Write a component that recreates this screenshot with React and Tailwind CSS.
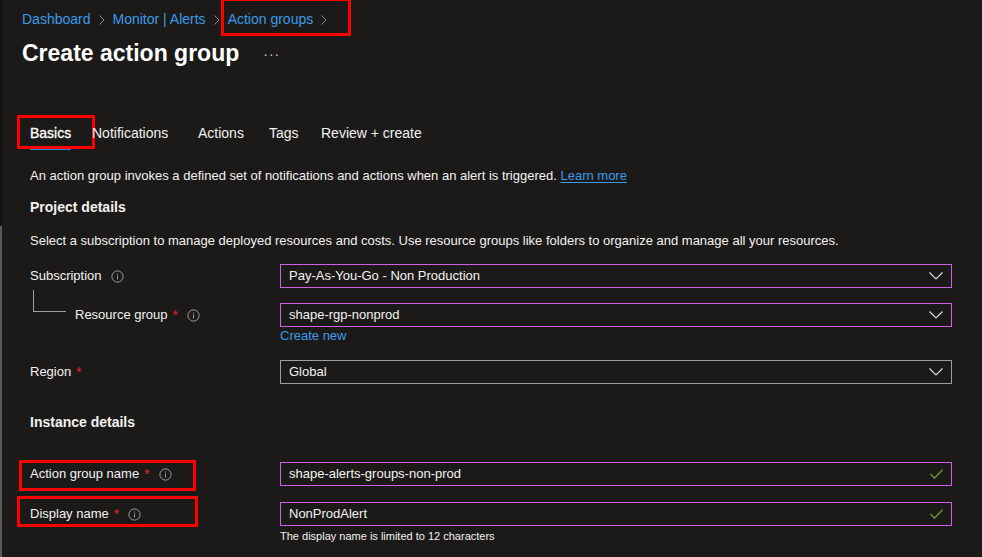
import { useState } from 'react'

const tabs = [
  { label: 'Basics', w: 'w-[62px]' },
  { label: 'Notifications', w: 'w-[106px]' },
  { label: 'Actions', w: 'w-[71px]' },
  { label: 'Tags', w: 'w-[52px]' },
  { label: 'Review + create', w: 'w-[120px]' },
]

const InfoIcon = () => (
  <svg width="13" height="13" viewBox="0 0 13 13" className="shrink-0">
    <circle cx="6.5" cy="6.5" r="5.6" fill="none" stroke="#a19f9d" strokeWidth="1" />
    <rect x="6" y="5.5" width="1" height="4" fill="#a19f9d" />
    <rect x="6" y="3.5" width="1" height="1" fill="#a19f9d" />
  </svg>
)

const Chevron = () => (
  <svg width="14" height="8" viewBox="0 0 14 8" className="shrink-0">
    <path d="M0.5 0.5 L7 7 L13.5 0.5" fill="none" stroke="#e1dfdd" strokeWidth="1.1" />
  </svg>
)

const Crumb = () => (
  <svg width="6" height="10" viewBox="0 0 6 10" className="mx-[8px] mt-[1px] shrink-0">
    <path d="M0.5 0.5 L5 5 L0.5 9.5" fill="none" stroke="#8a8886" strokeWidth="1" />
  </svg>
)

const Check = () => (
  <svg width="13" height="10" viewBox="0 0 13 10" className="shrink-0">
    <path d="M0.5 5 L4.5 9 L12.5 0.8" fill="none" stroke="#6b9a3a" strokeWidth="1.3" />
  </svg>
)

const Field = ({ value, border = 'border-[#d25ef0]', icon }) => (
  <div className={`flex h-6 w-[672px] items-center justify-between border ${border} pl-[8px] pr-[8px]`}>
    <span className="text-[13px] text-[#f3f2f1]">{value}</span>
    {icon === 'check' ? <Check /> : <Chevron />}
  </div>
)

const Required = () => <span className="ml-[5px] text-[14px] text-[#e3242b]">*</span>

const Label = ({ children }) => <span className="text-[13px] text-[#f3f2f1]">{children}</span>

const App = () => {
  const [active] = useState('Basics')

  return (
    <div className="flex h-[557px] w-[982px] overflow-hidden bg-[#1b1a19] font-['Liberation_Sans',Arial,sans-serif]">
      <div className="flex w-[2px] flex-col">
        <div className="h-[226px] bg-[#141312]" />
        <div className="flex-1 bg-[#5a5958]" />
      </div>

      <div className="flex flex-1 flex-col">
        {/* header */}
        <div className="pl-[20px] pt-[9px]">
          <div className="flex h-5 items-center text-[14px] leading-5 text-[#3c9be8]">
            <span>Dashboard</span>
            <Crumb />
            <span>Monitor | Alerts</span>
            <Crumb />
            <span className="relative flex items-center">
              Action groups
              <Crumb />
              <span className="absolute -left-[7px] -right-[16px] -top-[11px] -bottom-[7px] border-[3px] border-[#ff0000]" />
            </span>
          </div>
          <div className="mt-[8px] flex h-8 items-center">
            <h1 className="text-[23px] font-bold leading-8 text-white">Create action group</h1>
            <span className="ml-[24px] mt-[2px] text-[14px] tracking-[1px] text-[#c8c6c4]">···</span>
          </div>
        </div>

        {/* tabs */}
        <div className="mt-[52px] flex pl-[28px]">
          {tabs.map((t) => (
            <div key={t.label} className={`${t.w} shrink-0`}>
              <div className="relative inline-flex flex-col">
                <span className={`text-[14px] leading-5 ${t.label === active ? 'text-white [-webkit-text-stroke:0.3px_white]' : 'text-[#f3f2f1]'}`}>{t.label}</span>
                <span className={`mt-[5px] h-[2px] ${t.label === active ? 'bg-[#2b88d8]' : 'bg-transparent'}`} />
                {t.label === active && (
                  <span className="absolute -left-[13px] -right-[24px] -top-[8px] -bottom-[-1px] border-[3px] border-[#ff0000]" />
                )}
              </div>
            </div>
          ))}
        </div>

        {/* form */}
        <div className="pl-[28px]">
          <p className="mt-[16px] text-[13px] leading-5 text-[#f3f2f1]">
            An action group invokes a defined set of notifications and actions when an alert is triggered.{' '}
            <span className="text-[#3c9be8] underline underline-offset-2">Learn more</span>
          </p>
          <h2 className="mt-[11px] text-[14px] font-bold leading-5 text-[#f3f2f1]">Project details</h2>
          <p className="mt-[14px] text-[13px] leading-5 text-[#f3f2f1]">
            Select a subscription to manage deployed resources and costs. Use resource groups like folders to organize and manage all your resources.
          </p>

          <div className="mt-[13px] grid grid-cols-[250px_1fr] items-center">
            <div className="flex items-center gap-[9px]">
              <Label>Subscription</Label>
              <InfoIcon />
            </div>
            <Field value="Pay-As-You-Go - Non Production" />
          </div>

          <div className="grid grid-cols-[250px_1fr]">
            <div className="flex">
              <div className="ml-[3px] mt-[2px] h-[22px] w-[33px] border-b border-l border-[#a19f9d]" />
              <div className="ml-[9px] mt-[15px] flex h-6 items-center">
                <Label>Resource group</Label>
                <Required />
                <span className="ml-[9px]"><InfoIcon /></span>
              </div>
            </div>
            <div className="mt-[15px]">
              <Field value="shape-rgp-nonprod" />
              <div className="text-[13px] leading-[18px] text-[#3c9be8]">Create new</div>
            </div>
          </div>

          <div className="mt-[15px] grid grid-cols-[250px_1fr] items-center">
            <div className="flex items-center">
              <Label>Region</Label>
              <Required />
            </div>
            <Field value="Global" border="border-[#a19f9d]" />
          </div>

          <h2 className="mt-[28px] text-[14px] font-bold leading-5 text-[#f3f2f1]">Instance details</h2>

          <div className="mt-[30px] grid grid-cols-[250px_1fr] items-center">
            <div className="relative flex w-fit items-center">
              <Label>Action group name</Label>
              <Required />
              <span className="ml-[9px]"><InfoIcon /></span>
              <span className="absolute -left-[11px] -right-[24px] -top-[4px] -bottom-[6px] border-[3px] border-[#ff0000]" />
            </div>
            <Field value="shape-alerts-groups-non-prod" icon="check" />
          </div>

          <div className="mt-[16px] grid grid-cols-[250px_1fr]">
            <div className="flex h-6 items-center">
              <div className="relative flex items-center">
                <Label>Display name</Label>
                <Required />
                <span className="ml-[9px]"><InfoIcon /></span>
                <span className="absolute -left-[13px] -right-[57px] -top-[8px] -bottom-[2px] border-[3px] border-[#ff0000]" />
              </div>
            </div>
            <div>
              <Field value="NonProdAlert" icon="check" />
              <div className="text-[11px] leading-[20px] text-[#f3f2f1]">The display name is limited to 12 characters</div>
            </div>
          </div>
        </div>
      </div>
    </div>
  )
}

export default App
